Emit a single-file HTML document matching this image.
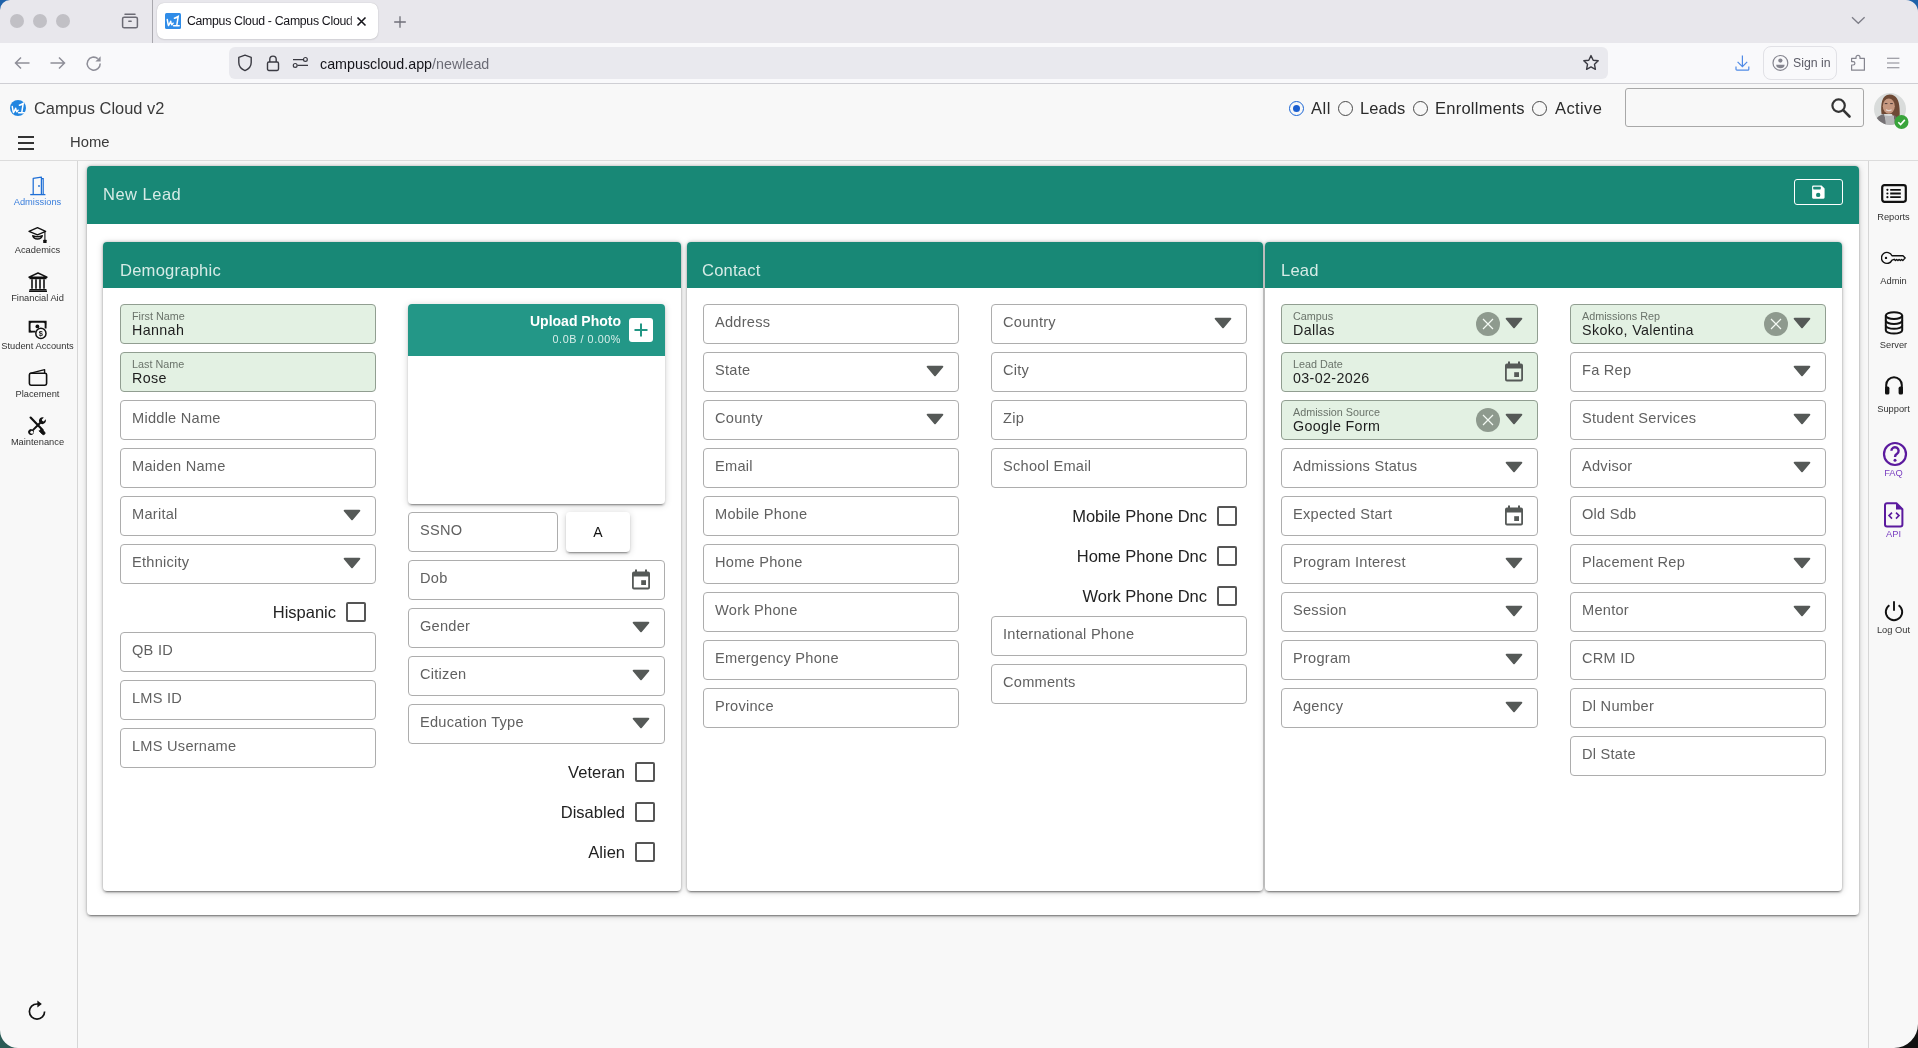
<!DOCTYPE html>
<html><head><meta charset="utf-8">
<style>
*{box-sizing:border-box;margin:0;padding:0}
html,body{width:1918px;height:1048px;overflow:hidden;-webkit-font-smoothing:antialiased;background:#f8f8f8;font-family:"Liberation Sans",sans-serif;color:#222}
.a{position:absolute}
#tabbar{position:absolute;left:0;top:0;width:1918px;height:43px;background:#e8e7ec}
#toolbar{position:absolute;left:0;top:43px;width:1918px;height:41px;background:#f9f9fb;border-bottom:1px solid #cfcfd4}
.dot{position:absolute;top:14px;width:14px;height:14px;border-radius:50%;background:#c1c0c5}
.tab{position:absolute;left:157px;top:3px;width:221px;height:36px;background:#fff;border-radius:7px;box-shadow:0 0 1px rgba(0,0,0,.25),0 1px 2px rgba(0,0,0,.08)}
.url{position:absolute;left:229px;top:47px;width:1379px;height:32px;background:#e9e9ee;border-radius:6px}
#hdr{position:absolute;left:0;top:84px;width:1918px;height:77px;background:#f8f8f8;border-bottom:1px solid #dcdcdc}
#lsb{position:absolute;left:0;top:161px;width:78px;height:887px;background:#f8f8f8;border-right:1px solid #d6d6d6}
#rsb{position:absolute;left:1868px;top:161px;width:50px;height:887px;background:#f8f8f8;border-left:1px solid #d6d6d6}
.sbl{position:absolute;width:75px;text-align:center;font-size:9.3px;color:#333;left:0}
.rsl{position:absolute;width:49px;text-align:center;font-size:9.3px;color:#333;left:0}
.card{position:absolute;background:#fff;border-radius:4px;box-shadow:0 3px 1px -2px rgba(0,0,0,.24),0 2px 2px 0 rgba(0,0,0,.16),0 0 3px rgba(0,0,0,.22),0 1px 7px 0 rgba(0,0,0,.18)}
.teal{background:#188876}
.sec{position:absolute;top:242px;height:649px;background:#fff;border-radius:4px;box-shadow:0 3px 1px -2px rgba(0,0,0,.24),0 2px 2px 0 rgba(0,0,0,.16),0 0 3px rgba(0,0,0,.22),0 1px 7px 0 rgba(0,0,0,.18);overflow:hidden}
.sech{position:absolute;left:0;top:0;width:100%;height:46px;background:#188876;color:#d6ebe6;font-size:16.6px;padding:21px 0 0 17px;line-height:16px;letter-spacing:.2px}
.f{position:absolute;height:40px;border:1px solid #adadad;border-radius:4px;background:#fff;font-size:14.6px;color:#616161;padding:0 0 0 11px;line-height:34px;white-space:nowrap;letter-spacing:.25px}
.g{background:#e3f1e3;border-color:#919e91}
.lbl{position:absolute;left:11px;top:6px;font-size:10.8px;line-height:11px;color:#6a736a;letter-spacing:0}
.val{position:absolute;left:11px;top:17px;font-size:14.3px;line-height:16px;color:#1e1e1e;letter-spacing:.35px}
.dd{position:absolute;right:14px;top:12px;display:block}
.clr{position:absolute;right:37px;top:7px;width:24px;height:24px;border-radius:50%;background:#8e9a8e}
.cb{position:absolute;width:20px;height:20px;border:2px solid #555;border-radius:2px}
.cbt{position:absolute;font-size:16.5px;color:#222;text-align:right;white-space:nowrap;line-height:20px}
.w1{left:120px;width:256px}
.w2{left:408px;width:257px}
.cal{position:absolute;right:13px;top:8px}
.clr svg{display:block}
.up{position:absolute;left:408px;top:304px;width:257px;height:200px;background:#fff;border-radius:4px;box-shadow:0 3px 1px -2px rgba(0,0,0,.24),0 2px 2px 0 rgba(0,0,0,.16),0 1px 7px 0 rgba(0,0,0,.18);overflow:hidden}
.uph{position:absolute;left:0;top:0;width:257px;height:52px;background:#239787}
.upt{position:absolute;right:44px;top:9px;font-size:14px;font-weight:bold;color:#fff;line-height:16px;white-space:nowrap}
.ups{position:absolute;right:44px;top:29px;font-size:10.8px;color:#d8eeea;line-height:12px;white-space:nowrap;letter-spacing:.55px}
.upb{position:absolute;left:221px;top:14px;width:24px;height:24px;background:#fff;border-radius:3px}
.upb svg{display:block}
.abtn{position:absolute;left:566px;top:512px;width:64px;height:40px;background:#fff;border-radius:4px;box-shadow:0 3px 1px -2px rgba(0,0,0,.24),0 2px 2px 0 rgba(0,0,0,.16),0 1px 7px 0 rgba(0,0,0,.18);text-align:center;font-size:14px;line-height:40px;color:#111}
</style></head><body><div id="root" style="position:absolute;left:0;top:0;width:1918px;height:1048px;will-change:transform">

<!-- browser tab bar -->
<div id="tabbar">
  <div class="dot" style="left:10px"></div>
  <div class="dot" style="left:33px"></div>
  <div class="dot" style="left:56px"></div>
  <svg class="a" style="left:120px;top:12px" width="20" height="18" viewBox="0 0 20 18"><path d="M5 2.2h10" stroke="#6b6b74" stroke-width="1.5" stroke-linecap="round" fill="none"/><rect x="2.6" y="5.2" width="14.8" height="10.6" rx="1.6" stroke="#6b6b74" stroke-width="1.5" fill="none"/><path d="M8.8 9.3h2.4" stroke="#6b6b74" stroke-width="1.4" stroke-linecap="round"/></svg>
  <div class="a" style="left:152px;top:0;width:1px;height:43px;background:#a9a8ae"></div>
  <svg class="a" style="left:1851px;top:16px" width="15" height="9" viewBox="0 0 15 9"><path d="M1 1.2l6.3 6.1 6.3-6.1" stroke="#7d7d87" stroke-width="1.3" fill="none"/></svg>
  <svg class="a" style="left:392px;top:14px" width="16" height="16" viewBox="0 0 16 16"><path d="M8 2.2v11.6M2.2 8h11.6" stroke="#6f6f78" stroke-width="1.3"/></svg>
</div>
<div id="toolbar">
  <svg class="a" style="left:13px;top:13px" width="18" height="14" viewBox="0 0 18 14"><path d="M16.5 7H2.5M8 1.5L2.5 7 8 12.5" stroke="#8e8e98" stroke-width="1.5" fill="none"/></svg>
  <svg class="a" style="left:49px;top:13px" width="18" height="14" viewBox="0 0 18 14"><path d="M1.5 7h14M10 1.5L15.5 7 10 12.5" stroke="#8e8e98" stroke-width="1.5" fill="none"/></svg>
  <svg class="a" style="left:85px;top:12px" width="18" height="17" viewBox="0 0 18 17"><path d="M15.2 8.5A6.5 6.5 0 1 1 12.8 3.6" stroke="#8e8e98" stroke-width="1.5" fill="none"/><path d="M15.6 1.2v5.2h-5.2z" fill="#8e8e98"/></svg>
</div>
<div class="tab">
  <svg class="a" style="left:8px;top:10px" width="16" height="16" viewBox="0 0 16 16"><rect width="16" height="16" rx="1.5" fill="#2f8ce8"/><path d="M2.3 6.6c.3 2 .6 4.2 1.2 5.9 1-1.2 1.6-2.8 2.2-4.3.1 1.3.4 2.6 1.1 3.6.5-.4.9-1 1.3-1.6" stroke="#fff" stroke-width="1.5" fill="none" stroke-linecap="round" stroke-linejoin="round"/><path d="M9.4 5.2c1.3-.3 2.5-.9 3.8-1.7L11.8 12.4M8.6 12.7h5.6" stroke="#fff" stroke-width="1.5" fill="none" stroke-linecap="round"/></svg>
  <div class="a" style="left:30px;top:10px;width:165px;height:17px;overflow:hidden;font-size:12.3px;letter-spacing:-.3px;line-height:17px;color:#15141a;white-space:nowrap;-webkit-mask-image:linear-gradient(90deg,#000 160px,transparent 172px)">Campus Cloud - Campus Cloud v2</div>
  <svg class="a" style="left:199px;top:13px" width="11" height="11" viewBox="0 0 11 11"><path d="M1.5 1.5l8 8M9.5 1.5l-8 8" stroke="#15141a" stroke-width="1.6"/></svg>
</div>
<div class="url">
  <svg class="a" style="left:8px;top:7px" width="16" height="18" viewBox="0 0 16 18"><path d="M8 1.2L14.2 3.4v5.2c0 3.6-2.6 6.6-6.2 8-3.6-1.4-6.2-4.4-6.2-8V3.4z" stroke="#3a3a42" stroke-width="1.4" fill="none" stroke-linejoin="round"/></svg>
  <svg class="a" style="left:37px;top:7px" width="14" height="18" viewBox="0 0 14 18"><rect x="1.5" y="8" width="11" height="8.5" rx="1.4" stroke="#3a3a42" stroke-width="1.4" fill="none"/><path d="M3.8 8V5.3a3.2 3.2 0 0 1 6.4 0V8" stroke="#3a3a42" stroke-width="1.4" fill="none"/></svg>
  <svg class="a" style="left:63px;top:9px" width="17" height="13" viewBox="0 0 17 13"><path d="M1 3.6h10.6M5.4 9.4h10.6" stroke="#3a3a42" stroke-width="1.3"/><circle cx="13.4" cy="3.4" r="1.9" stroke="#3a3a42" stroke-width="1.2" fill="#e9e9ee"/><circle cx="3.2" cy="9.4" r="1.9" stroke="#3a3a42" stroke-width="1.2" fill="#e9e9ee"/></svg>
  <div class="a" style="left:91px;top:8px;font-size:14.3px;line-height:18px;color:#15141a;white-space:nowrap">campuscloud.app<span style="color:#6b6b75">/newlead</span></div>
  <svg class="a" style="left:1353px;top:7px" width="18" height="18" viewBox="0 0 18 18"><path d="M9 1.6l2.2 4.6 5 .6-3.7 3.5.9 5L9 12.9l-4.4 2.4.9-5L1.8 6.8l5-.6z" stroke="#3a3a42" stroke-width="1.4" fill="none" stroke-linejoin="round"/></svg>
</div>
<svg class="a" style="left:1733px;top:54px" width="18" height="18" viewBox="0 0 18 18"><path d="M9.4 1.6v10.6M4.6 7.8l4.8 4.8 4.8-4.8" stroke="#4f8ae6" stroke-width="1.2" fill="none"/><path d="M3 12.6v2.6a.9.9 0 0 0 .9.9h11a.9.9 0 0 0 .9-.9v-2.6" stroke="#4f8ae6" stroke-width="1.2" fill="none"/></svg>
<div class="a" style="left:1763px;top:46px;width:74px;height:34px;border:1px solid #e1e1e6;border-radius:8px"></div>
<svg class="a" style="left:1771px;top:54px" width="18" height="18" viewBox="0 0 18 18"><circle cx="9.4" cy="8.9" r="7.4" stroke="#85858f" stroke-width="1.2" fill="none"/><circle cx="9.4" cy="6.6" r="2.1" fill="#85858f"/><path d="M5.2 10.8h8.4a4.2 3.4 0 0 1-8.4 0z" fill="#85858f"/></svg>
<div class="a" style="left:1793px;top:55px;font-size:12.3px;line-height:16px;color:#5b5b66;white-space:nowrap">Sign in</div>
<svg class="a" style="left:1849px;top:54px" width="18" height="18" viewBox="0 0 18 18"><path d="M2.6 16.2v-5.2h1.6a1.7 1.7 0 0 0 0-3.4H2.6V4.4h4.4V3.4a2 2 0 0 1 4 0v1h4.4v11.8z" stroke="#85858f" stroke-width="1.2" fill="none" stroke-linejoin="round"/></svg>
<svg class="a" style="left:1885px;top:56px" width="17" height="14" viewBox="0 0 17 14"><path d="M2 2.2h12.4M2 7h12.4M2 11.8h12.4" stroke="#85858f" stroke-width="1.1"/></svg>
<!-- app header -->
<div id="hdr">
  <svg class="a" style="left:10px;top:16px" width="16" height="16" viewBox="0 0 16 16"><circle cx="8" cy="8" r="8" fill="#2185e0"/><path d="M2.3 6.6c.3 2 .6 4.2 1.2 5.9 1-1.2 1.6-2.8 2.2-4.3.1 1.3.4 2.6 1.1 3.6.5-.4.9-1 1.3-1.6" stroke="#fff" stroke-width="1.5" fill="none" stroke-linecap="round" stroke-linejoin="round"/><path d="M9.4 5.2c1.3-.3 2.5-.9 3.8-1.7L11.8 12.4M8.6 12.7h5.6" stroke="#fff" stroke-width="1.5" fill="none" stroke-linecap="round"/></svg>
  <div class="a" style="left:34px;top:15px;font-size:16.4px;line-height:18px;color:#3a3a3a;white-space:nowrap">Campus Cloud v2</div>
  <div class="a" style="left:18px;top:52px;width:16px;height:2px;background:#333"></div>
  <div class="a" style="left:18px;top:58px;width:16px;height:2px;background:#333"></div>
  <div class="a" style="left:18px;top:64px;width:16px;height:2px;background:#333"></div>
  <div class="a" style="left:70px;top:50px;font-size:14.8px;line-height:16px;color:#3a3a3a;white-space:nowrap">Home</div>
  <!-- radios -->
  <div class="a" style="left:1289px;top:17px;width:15px;height:15px;border-radius:50%;border:1.8px solid #1b66d6"></div>
  <div class="a" style="left:1292.6px;top:20.6px;width:7.8px;height:7.8px;border-radius:50%;background:#1b5fd0"></div>
  <div class="a" style="left:1311px;top:15px;font-size:16.5px;line-height:18px;color:#2b2b2b;white-space:nowrap;letter-spacing:.6px">All</div>
  <div class="a" style="left:1338px;top:17px;width:15px;height:15px;border-radius:50%;border:1.4px solid #4a4a4a"></div>
  <div class="a" style="left:1360px;top:15px;font-size:16.5px;line-height:18px;color:#2b2b2b;white-space:nowrap;letter-spacing:.1px">Leads</div>
  <div class="a" style="left:1413px;top:17px;width:15px;height:15px;border-radius:50%;border:1.4px solid #4a4a4a"></div>
  <div class="a" style="left:1435px;top:15px;font-size:16.5px;line-height:18px;color:#2b2b2b;white-space:nowrap;letter-spacing:.25px">Enrollments</div>
  <div class="a" style="left:1532px;top:17px;width:15px;height:15px;border-radius:50%;border:1.4px solid #4a4a4a"></div>
  <div class="a" style="left:1555px;top:15px;font-size:16.5px;line-height:18px;color:#2b2b2b;white-space:nowrap;letter-spacing:.4px">Active</div>
  <!-- search -->
  <div class="a" style="left:1625px;top:4px;width:239px;height:39px;border:1px solid #a8a8a8;border-radius:3px;background:#f8f8f8"></div>
  <svg class="a" style="left:1830px;top:13px" width="22" height="22" viewBox="0 0 22 22"><circle cx="8.6" cy="8.6" r="6.2" stroke="#333" stroke-width="2.2" fill="none"/><path d="M13.2 13.2l6.3 6.3" stroke="#333" stroke-width="2.6" stroke-linecap="round"/></svg>
  <!-- avatar -->
  <svg class="a" style="left:1866px;top:2px" width="48" height="48" viewBox="0 0 48 48">
    <defs><clipPath id="av"><circle cx="24" cy="23" r="16"/></clipPath><filter id="bl"><feGaussianBlur stdDeviation=".45"/></filter></defs>
    <circle cx="24" cy="23" r="16" fill="#d9dcdb"/>
    <g clip-path="url(#av)" filter="url(#bl)">
      <path d="M15.5 28C14.5 18 16 8.5 23.5 8.5S33 15 33.5 22c.4 6 .5 10-1.5 13l-4-2-2-5z" fill="#6e4a34"/>
      <ellipse cx="22.8" cy="20.2" rx="6" ry="7.6" fill="#c69880"/>
      <path d="M18.8 17.6h2.6M24.2 17.6h2.6" stroke="#4a3a36" stroke-width="1"/>
      <path d="M20 23.8c1.8 1 4 1 5.6 0" stroke="#e8d8d0" stroke-width="1.2" fill="none"/>
      <path d="M7 42c1-8 5-13 11-14l4 14z" fill="#767274"/>
      <path d="M19 29.5c2 .6 6 .6 9 0l1 12.5H20z" fill="#b6b6b8"/>
      <path d="M28 29c2.5 1 4.5 4 5 13h-4z" fill="#6d6668"/>
    </g>
    <circle cx="35.5" cy="36" r="7" fill="#39a43b"/>
    <path d="M32.3 36.2l2.3 2.3 4.2-4.6" stroke="#fff" stroke-width="1.6" fill="none"/>
  </svg>
</div>
<div id="lsb">
  <svg class="a" style="left:28px;top:15px" width="19" height="20" viewBox="0 0 19 20"><path d="M5.2 18.4V2.4L13.4 1.2v17.2" stroke="#1f6fd6" stroke-width="1.25" fill="none" stroke-linejoin="round"/><path d="M13.4 2.6h1.8v15.8" stroke="#1f6fd6" stroke-width="1.2" fill="none"/><path d="M2.2 18.6h15.2" stroke="#1f6fd6" stroke-width="1.3"/><circle cx="11" cy="10" r=".9" fill="#1f6fd6"/></svg>
  <div class="sbl" style="top:36px;color:#3b7fdc">Admissions</div>
  <svg class="a" style="left:28px;top:65px" width="20" height="18" viewBox="0 0 20 18"><path d="M9.5 1.6L17.6 5.4 9.5 8.8 1 5.4z" stroke="#111" stroke-width="1.3" fill="none" stroke-linejoin="round"/><path d="M4.6 9.6c0 1.6 2.2 3.6 4.9 3.6s4.9-2 4.9-3.6c-1.5.6-3.2 1-4.9 1s-3.4-.4-4.9-1z" stroke="#111" stroke-width="1.2" fill="none" stroke-linejoin="round"/><path d="M5 11.2c1.4.8 3 1.1 4.5 1.1s3.1-.3 4.5-1.1" stroke="#111" stroke-width=".9" fill="none"/><path d="M16.9 5.8v8.4" stroke="#111" stroke-width="1.1"/><rect x="15.2" y="13.8" width="3.4" height="3.2" rx=".5" fill="#111"/></svg>
  <div class="sbl" style="top:84px">Academics</div>
  <svg class="a" style="left:28px;top:111px" width="20" height="20" viewBox="0 0 20 20"><path d="M10 1L19 5.2H1z" stroke="#111" stroke-width="1.4" fill="none" stroke-linejoin="round"/><path d="M1.5 6.4h17" stroke="#111" stroke-width="1.6"/><path d="M4 7.2v9.6M8 7.2v9.6M12 7.2v9.6M16 7.2v9.6" stroke="#111" stroke-width="1.6"/><path d="M1.5 17.6h17M1 19.2h18" stroke="#111" stroke-width="1.4"/></svg>
  <div class="sbl" style="top:132px">Financial Aid</div>
  <svg class="a" style="left:28px;top:159px" width="20" height="20" viewBox="0 0 20 20"><path d="M7.6 11.6H1.6V1.8h16v6.6" stroke="#111" stroke-width="1.9" fill="none"/><path d="M1 1.2h3.6L1 4.8zM18.2 1.2h-3.6l3.6 3.6zM1 12.2h3.4L1 8.8z" fill="#111"/><circle cx="9.4" cy="6.4" r="1.9" fill="#111"/><circle cx="12.9" cy="13.4" r="5.1" stroke="#111" stroke-width="1.5" fill="#f8f8f8"/><text x="12.9" y="16.1" font-size="7.4" font-family="Liberation Sans" text-anchor="middle" fill="#111" font-weight="bold">$</text></svg>
  <div class="sbl" style="top:180px;left:-2px;width:79px">Student Accounts</div>
  <svg class="a" style="left:28px;top:207px" width="20" height="19" viewBox="0 0 20 19"><path d="M2 5.4L16.6 1.6v3.4" stroke="#111" stroke-width="1.4" fill="none" stroke-linejoin="round"/><rect x="1.4" y="5.2" width="17.2" height="12" rx="1.6" stroke="#111" stroke-width="1.6" fill="none"/></svg>
  <div class="sbl" style="top:228px">Placement</div>
  <svg class="a" style="left:28px;top:255px" width="20" height="20" viewBox="0 0 20 20"><path d="M2.6 1.6l12 12.4" stroke="#111" stroke-width="2.2" stroke-linecap="round"/><path d="M13.2 12.6l3.6 3.6a1.6 1.6 0 0 1-2.2 2.2l-3.6-3.6" fill="#111" stroke="#111" stroke-width="1"/><path d="M17.6 3.2a3.6 3.6 0 0 1-4.8 4.6L5.6 14.8a2.9 2.9 0 1 1-1.4-1.4l7.1-7.1a3.6 3.6 0 0 1 4.6-4.8l-2.1 2.1.5 1.5 1.5.5z" fill="#111"/><circle cx="3.8" cy="16.2" r="1.5" fill="#f8f8f8"/></svg>
  <div class="sbl" style="top:276px">Maintenance</div>
  <svg class="a" style="left:27px;top:838px" width="21" height="23" viewBox="0 0 21 23"><path d="M17.6 12.6a7.6 7.6 0 1 1-7.6-7.6h1.2" stroke="#111" stroke-width="1.7" fill="none"/><path d="M10.4 1.4l4.4 3.6-4.4 3.6z" fill="#111"/></svg>
</div>
<div id="rsb">
  <svg class="a" style="left:12px;top:23px" width="26" height="19" viewBox="0 0 26 19"><rect x="1.2" y="1.2" width="23.6" height="16.6" rx="2.2" stroke="#111" stroke-width="2.2" fill="none"/><circle cx="6.4" cy="5.8" r="1.1" fill="#111"/><circle cx="6.4" cy="9.5" r="1.1" fill="#111"/><circle cx="6.4" cy="13.2" r="1.1" fill="#111"/><path d="M9.2 5.8h10.6M9.2 9.5h10.6M9.2 13.2h10.6" stroke="#111" stroke-width="1.8"/></svg>
  <div class="rsl" style="top:51px">Reports</div>
  <svg class="a" style="left:12px;top:90px" width="27" height="14" viewBox="0 0 27 14"><path d="M11 4.7A5.5 5.5 0 1 0 11 9.1L13.2 8.3 14.4 9.6 15.6 8.4 16.9 9.6 18.1 8.4 19.4 9.6 20.6 8.4 21.8 9.6 24.2 6.9 22 4.7z" stroke="#111" stroke-width="1.4" fill="none" stroke-linejoin="round"/><circle cx="5" cy="6.9" r="1.2" fill="#111"/></svg>
  <div class="rsl" style="top:115px">Admin</div>
  <svg class="a" style="left:15px;top:150px" width="20" height="24" viewBox="0 0 20 24"><ellipse cx="10" cy="4.6" rx="8.2" ry="3.4" stroke="#111" stroke-width="2" fill="none"/><path d="M1.8 4.6v14.6c0 1.9 3.7 3.4 8.2 3.4s8.2-1.5 8.2-3.4V4.6" stroke="#111" stroke-width="2" fill="none"/><path d="M1.8 9.6c0 1.9 3.7 3.4 8.2 3.4s8.2-1.5 8.2-3.4M1.8 14.4c0 1.9 3.7 3.4 8.2 3.4s8.2-1.5 8.2-3.4" stroke="#111" stroke-width="2" fill="none"/></svg>
  <div class="rsl" style="top:179px">Server</div>
  <svg class="a" style="left:15px;top:214px" width="20" height="21" viewBox="0 0 20 21"><path d="M2.2 13V10a7.8 7.8 0 0 1 15.6 0v3" stroke="#111" stroke-width="2" fill="none"/><rect x="1" y="11.6" width="4.4" height="8" rx="1.6" fill="#111"/><rect x="14.6" y="11.6" width="4.4" height="8" rx="1.6" fill="#111"/></svg>
  <div class="rsl" style="top:243px">Support</div>
  <svg class="a" style="left:13px;top:280px" width="26" height="26" viewBox="0 0 26 26"><circle cx="13" cy="13" r="11" stroke="#5b1a9e" stroke-width="2.2" fill="none"/><path d="M9.4 9.8a3.6 3.6 0 1 1 5.6 3c-1.4.9-2 1.5-2 3.2" stroke="#5b1a9e" stroke-width="2.4" fill="none"/><circle cx="13" cy="19.2" r="1.5" fill="#5b1a9e"/></svg>
  <div class="rsl" style="top:307px;color:#7a3fc0">FAQ</div>
  <svg class="a" style="left:15px;top:341px" width="20" height="26" viewBox="0 0 20 26"><path d="M3 1.2h9.4l6 6v15.4a2 2 0 0 1-2 2H3a2 2 0 0 1-2-2V3.2a2 2 0 0 1 2-2z" stroke="#5b1a9e" stroke-width="2" fill="none" stroke-linejoin="round"/><path d="M12 1.4v6.2h6.2z" fill="#5b1a9e"/><path d="M8 10.6l-3 3 3 3M12 10.6l3 3-3 3" stroke="#5b1a9e" stroke-width="1.6" fill="none"/></svg>
  <div class="rsl" style="top:368px;color:#7a3fc0">API</div>
  <svg class="a" style="left:15px;top:439px" width="20" height="23" viewBox="0 0 20 23"><path d="M10 1.2v9.6" stroke="#111" stroke-width="1.9"/><path d="M5.4 5.2a8.2 8.2 0 1 0 9.2 0" stroke="#111" stroke-width="1.9" fill="none"/></svg>
  <div class="rsl" style="top:464px">Log Out</div>
</div>

<!-- main card -->
<div class="card" style="left:87px;top:166px;width:1772px;height:749px">
  <div class="teal" style="position:absolute;left:0;top:0;width:100%;height:58px;border-radius:4px 4px 0 0">
    <div class="a" style="left:16px;top:19px;font-size:16.5px;line-height:18px;color:#d6ebe6;white-space:nowrap;letter-spacing:.5px">New Lead</div>
    <div class="a" style="left:1707px;top:13px;width:49px;height:26px;border:1.3px solid #fff;border-radius:3px">
      <svg class="a" style="left:16px;top:4px" width="16" height="16" viewBox="0 0 16 16"><path d="M2.2 1.6h8.4l3 3v9a1.1 1.1 0 0 1-1.1 1.1H2.2a1.1 1.1 0 0 1-1.1-1.1V2.7a1.1 1.1 0 0 1 1.1-1.1z" fill="#fff"/><rect x="2.2" y="2.8" width="7.6" height="2.6" rx=".7" fill="#188876"/><circle cx="7.2" cy="10.9" r="2.2" fill="#188876"/></svg>
    </div>
  </div>
</div>

<div class="sec" style="left:103px;width:578px"><div class="sech">Demographic</div></div>
<div class="sec" style="left:687px;width:576px"><div class="sech" style="padding-left:15px">Contact</div></div>
<div class="sec" style="left:1265px;width:577px"><div class="sech" style="padding-left:16px">Lead</div></div>

<!-- FORM -->
<div class="f g" style="left:120px;top:304px;width:256px"><div class="lbl">First Name</div><div class="val">Hannah</div></div>
<div class="f g" style="left:120px;top:352px;width:256px"><div class="lbl">Last Name</div><div class="val">Rose</div></div>
<div class="f" style="left:120px;top:400px;width:256px">Middle Name</div>
<div class="f" style="left:120px;top:448px;width:256px">Maiden Name</div>
<div class="f" style="left:120px;top:496px;width:256px">Marital<svg class="dd" width="18" height="12" viewBox="0 0 18 12"><path d="M1.6 .8h14.8a.9.9 0 0 1 .7 1.5L9.7 10.9a.9.9 0 0 1-1.4 0L.9 2.3A.9.9 0 0 1 1.6.8z" fill="#555957"/></svg></div>
<div class="f" style="left:120px;top:544px;width:256px">Ethnicity<svg class="dd" width="18" height="12" viewBox="0 0 18 12"><path d="M1.6 .8h14.8a.9.9 0 0 1 .7 1.5L9.7 10.9a.9.9 0 0 1-1.4 0L.9 2.3A.9.9 0 0 1 1.6.8z" fill="#555957"/></svg></div>
<div class="cbt" style="right:1582px;top:602px">Hispanic</div>
<div class="cb" style="left:346px;top:602px"></div>
<div class="f" style="left:120px;top:632px;width:256px">QB ID</div>
<div class="f" style="left:120px;top:680px;width:256px">LMS ID</div>
<div class="f" style="left:120px;top:728px;width:256px">LMS Username</div>
<div class="up"><div class="uph"><div class="upt">Upload Photo</div><div class="ups">0.0B / 0.00%</div><div class="upb"><svg width="24" height="24" viewBox="0 0 24 24"><path d="M12 5.5v13M5.5 12h13" stroke="#219684" stroke-width="2"/></svg></div></div></div>
<div class="f" style="left:408px;top:512px;width:150px">SSNO</div>
<div class="abtn">A</div>
<div class="f" style="left:408px;top:560px;width:257px">Dob<svg class="cal" width="20" height="22" viewBox="0 0 20 22"><path d="M5 .6v3M15 .6v3" stroke="#555957" stroke-width="2"/><path fill-rule="evenodd" d="M3 2.4h14a2 2 0 0 1 2 2v14.2a2 2 0 0 1-2 2H3a2 2 0 0 1-2-2V4.4a2 2 0 0 1 2-2zM2.8 7.4v11.2h14.4V7.4z" fill="#555957"/><rect x="10.2" y="11.2" width="4.8" height="4.8" fill="#555957"/></svg></div>
<div class="f" style="left:408px;top:608px;width:257px">Gender<svg class="dd" width="18" height="12" viewBox="0 0 18 12"><path d="M1.6 .8h14.8a.9.9 0 0 1 .7 1.5L9.7 10.9a.9.9 0 0 1-1.4 0L.9 2.3A.9.9 0 0 1 1.6.8z" fill="#555957"/></svg></div>
<div class="f" style="left:408px;top:656px;width:257px">Citizen<svg class="dd" width="18" height="12" viewBox="0 0 18 12"><path d="M1.6 .8h14.8a.9.9 0 0 1 .7 1.5L9.7 10.9a.9.9 0 0 1-1.4 0L.9 2.3A.9.9 0 0 1 1.6.8z" fill="#555957"/></svg></div>
<div class="f" style="left:408px;top:704px;width:257px">Education Type<svg class="dd" width="18" height="12" viewBox="0 0 18 12"><path d="M1.6 .8h14.8a.9.9 0 0 1 .7 1.5L9.7 10.9a.9.9 0 0 1-1.4 0L.9 2.3A.9.9 0 0 1 1.6.8z" fill="#555957"/></svg></div>
<div class="cbt" style="right:1293px;top:762px">Veteran</div>
<div class="cb" style="left:635px;top:762px"></div>
<div class="cbt" style="right:1293px;top:802px">Disabled</div>
<div class="cb" style="left:635px;top:802px"></div>
<div class="cbt" style="right:1293px;top:842px">Alien</div>
<div class="cb" style="left:635px;top:842px"></div>
<div class="f" style="left:703px;top:304px;width:256px">Address</div>
<div class="f" style="left:703px;top:352px;width:256px">State<svg class="dd" width="18" height="12" viewBox="0 0 18 12"><path d="M1.6 .8h14.8a.9.9 0 0 1 .7 1.5L9.7 10.9a.9.9 0 0 1-1.4 0L.9 2.3A.9.9 0 0 1 1.6.8z" fill="#555957"/></svg></div>
<div class="f" style="left:703px;top:400px;width:256px">County<svg class="dd" width="18" height="12" viewBox="0 0 18 12"><path d="M1.6 .8h14.8a.9.9 0 0 1 .7 1.5L9.7 10.9a.9.9 0 0 1-1.4 0L.9 2.3A.9.9 0 0 1 1.6.8z" fill="#555957"/></svg></div>
<div class="f" style="left:703px;top:448px;width:256px">Email</div>
<div class="f" style="left:703px;top:496px;width:256px">Mobile Phone</div>
<div class="f" style="left:703px;top:544px;width:256px">Home Phone</div>
<div class="f" style="left:703px;top:592px;width:256px">Work Phone</div>
<div class="f" style="left:703px;top:640px;width:256px">Emergency Phone</div>
<div class="f" style="left:703px;top:688px;width:256px">Province</div>
<div class="f" style="left:991px;top:304px;width:256px">Country<svg class="dd" width="18" height="12" viewBox="0 0 18 12"><path d="M1.6 .8h14.8a.9.9 0 0 1 .7 1.5L9.7 10.9a.9.9 0 0 1-1.4 0L.9 2.3A.9.9 0 0 1 1.6.8z" fill="#555957"/></svg></div>
<div class="f" style="left:991px;top:352px;width:256px">City</div>
<div class="f" style="left:991px;top:400px;width:256px">Zip</div>
<div class="f" style="left:991px;top:448px;width:256px">School Email</div>
<div class="cbt" style="right:711px;top:506px">Mobile Phone Dnc</div>
<div class="cb" style="left:1217px;top:506px"></div>
<div class="cbt" style="right:711px;top:546px">Home Phone Dnc</div>
<div class="cb" style="left:1217px;top:546px"></div>
<div class="cbt" style="right:711px;top:586px">Work Phone Dnc</div>
<div class="cb" style="left:1217px;top:586px"></div>
<div class="f" style="left:991px;top:616px;width:256px">International Phone</div>
<div class="f" style="left:991px;top:664px;width:256px">Comments</div>
<div class="f g" style="left:1281px;top:304px;width:257px"><div class="lbl">Campus</div><div class="val">Dallas</div><svg class="dd" width="18" height="12" viewBox="0 0 18 12"><path d="M1.6 .8h14.8a.9.9 0 0 1 .7 1.5L9.7 10.9a.9.9 0 0 1-1.4 0L.9 2.3A.9.9 0 0 1 1.6.8z" fill="#555957"/></svg><div class="clr"><svg width="24" height="24" viewBox="0 0 24 24"><path d="M7 7l10 10M17 7L7 17" stroke="#f4faf4" stroke-width="1.2"/></svg></div></div>
<div class="f g" style="left:1281px;top:352px;width:257px"><div class="lbl">Lead Date</div><div class="val">03-02-2026</div><svg class="cal" width="20" height="22" viewBox="0 0 20 22"><path d="M5 .6v3M15 .6v3" stroke="#555957" stroke-width="2"/><path fill-rule="evenodd" d="M3 2.4h14a2 2 0 0 1 2 2v14.2a2 2 0 0 1-2 2H3a2 2 0 0 1-2-2V4.4a2 2 0 0 1 2-2zM2.8 7.4v11.2h14.4V7.4z" fill="#555957"/><rect x="10.2" y="11.2" width="4.8" height="4.8" fill="#555957"/></svg></div>
<div class="f g" style="left:1281px;top:400px;width:257px"><div class="lbl">Admission Source</div><div class="val">Google Form</div><svg class="dd" width="18" height="12" viewBox="0 0 18 12"><path d="M1.6 .8h14.8a.9.9 0 0 1 .7 1.5L9.7 10.9a.9.9 0 0 1-1.4 0L.9 2.3A.9.9 0 0 1 1.6.8z" fill="#555957"/></svg><div class="clr"><svg width="24" height="24" viewBox="0 0 24 24"><path d="M7 7l10 10M17 7L7 17" stroke="#f4faf4" stroke-width="1.2"/></svg></div></div>
<div class="f" style="left:1281px;top:448px;width:257px">Admissions Status<svg class="dd" width="18" height="12" viewBox="0 0 18 12"><path d="M1.6 .8h14.8a.9.9 0 0 1 .7 1.5L9.7 10.9a.9.9 0 0 1-1.4 0L.9 2.3A.9.9 0 0 1 1.6.8z" fill="#555957"/></svg></div>
<div class="f" style="left:1281px;top:496px;width:257px">Expected Start<svg class="cal" width="20" height="22" viewBox="0 0 20 22"><path d="M5 .6v3M15 .6v3" stroke="#555957" stroke-width="2"/><path fill-rule="evenodd" d="M3 2.4h14a2 2 0 0 1 2 2v14.2a2 2 0 0 1-2 2H3a2 2 0 0 1-2-2V4.4a2 2 0 0 1 2-2zM2.8 7.4v11.2h14.4V7.4z" fill="#555957"/><rect x="10.2" y="11.2" width="4.8" height="4.8" fill="#555957"/></svg></div>
<div class="f" style="left:1281px;top:544px;width:257px">Program Interest<svg class="dd" width="18" height="12" viewBox="0 0 18 12"><path d="M1.6 .8h14.8a.9.9 0 0 1 .7 1.5L9.7 10.9a.9.9 0 0 1-1.4 0L.9 2.3A.9.9 0 0 1 1.6.8z" fill="#555957"/></svg></div>
<div class="f" style="left:1281px;top:592px;width:257px">Session<svg class="dd" width="18" height="12" viewBox="0 0 18 12"><path d="M1.6 .8h14.8a.9.9 0 0 1 .7 1.5L9.7 10.9a.9.9 0 0 1-1.4 0L.9 2.3A.9.9 0 0 1 1.6.8z" fill="#555957"/></svg></div>
<div class="f" style="left:1281px;top:640px;width:257px">Program<svg class="dd" width="18" height="12" viewBox="0 0 18 12"><path d="M1.6 .8h14.8a.9.9 0 0 1 .7 1.5L9.7 10.9a.9.9 0 0 1-1.4 0L.9 2.3A.9.9 0 0 1 1.6.8z" fill="#555957"/></svg></div>
<div class="f" style="left:1281px;top:688px;width:257px">Agency<svg class="dd" width="18" height="12" viewBox="0 0 18 12"><path d="M1.6 .8h14.8a.9.9 0 0 1 .7 1.5L9.7 10.9a.9.9 0 0 1-1.4 0L.9 2.3A.9.9 0 0 1 1.6.8z" fill="#555957"/></svg></div>
<div class="f g" style="left:1570px;top:304px;width:256px"><div class="lbl">Admissions Rep</div><div class="val">Skoko, Valentina</div><svg class="dd" width="18" height="12" viewBox="0 0 18 12"><path d="M1.6 .8h14.8a.9.9 0 0 1 .7 1.5L9.7 10.9a.9.9 0 0 1-1.4 0L.9 2.3A.9.9 0 0 1 1.6.8z" fill="#555957"/></svg><div class="clr"><svg width="24" height="24" viewBox="0 0 24 24"><path d="M7 7l10 10M17 7L7 17" stroke="#f4faf4" stroke-width="1.2"/></svg></div></div>
<div class="f" style="left:1570px;top:352px;width:256px">Fa Rep<svg class="dd" width="18" height="12" viewBox="0 0 18 12"><path d="M1.6 .8h14.8a.9.9 0 0 1 .7 1.5L9.7 10.9a.9.9 0 0 1-1.4 0L.9 2.3A.9.9 0 0 1 1.6.8z" fill="#555957"/></svg></div>
<div class="f" style="left:1570px;top:400px;width:256px">Student Services<svg class="dd" width="18" height="12" viewBox="0 0 18 12"><path d="M1.6 .8h14.8a.9.9 0 0 1 .7 1.5L9.7 10.9a.9.9 0 0 1-1.4 0L.9 2.3A.9.9 0 0 1 1.6.8z" fill="#555957"/></svg></div>
<div class="f" style="left:1570px;top:448px;width:256px">Advisor<svg class="dd" width="18" height="12" viewBox="0 0 18 12"><path d="M1.6 .8h14.8a.9.9 0 0 1 .7 1.5L9.7 10.9a.9.9 0 0 1-1.4 0L.9 2.3A.9.9 0 0 1 1.6.8z" fill="#555957"/></svg></div>
<div class="f" style="left:1570px;top:496px;width:256px">Old Sdb</div>
<div class="f" style="left:1570px;top:544px;width:256px">Placement Rep<svg class="dd" width="18" height="12" viewBox="0 0 18 12"><path d="M1.6 .8h14.8a.9.9 0 0 1 .7 1.5L9.7 10.9a.9.9 0 0 1-1.4 0L.9 2.3A.9.9 0 0 1 1.6.8z" fill="#555957"/></svg></div>
<div class="f" style="left:1570px;top:592px;width:256px">Mentor<svg class="dd" width="18" height="12" viewBox="0 0 18 12"><path d="M1.6 .8h14.8a.9.9 0 0 1 .7 1.5L9.7 10.9a.9.9 0 0 1-1.4 0L.9 2.3A.9.9 0 0 1 1.6.8z" fill="#555957"/></svg></div>
<div class="f" style="left:1570px;top:640px;width:256px">CRM ID</div>
<div class="f" style="left:1570px;top:688px;width:256px">Dl Number</div>
<div class="f" style="left:1570px;top:736px;width:256px">Dl State</div>
<!-- /FORM -->
<!-- window corners -->
<svg class="a" style="left:0;top:0" width="14" height="14" viewBox="0 0 14 14"><path d="M0 0H10A10 10 0 0 0 0 10Z" fill="#1f62aa"/></svg>
<svg class="a" style="left:1904px;top:0" width="14" height="14" viewBox="0 0 14 14"><path d="M14 0H2A12 12 0 0 1 14 12Z" fill="#1f62aa"/></svg>
<svg class="a" style="left:0;top:1028px" width="20" height="20" viewBox="0 0 20 20"><path d="M0 20H18A18 18 0 0 1 0 2Z" fill="#2a5a55"/></svg>
<svg class="a" style="left:1892px;top:1022px" width="26" height="26" viewBox="0 0 26 26"><path d="M26 26H2A24 24 0 0 0 26 2Z" fill="#111"/></svg>
</div></body></html>
